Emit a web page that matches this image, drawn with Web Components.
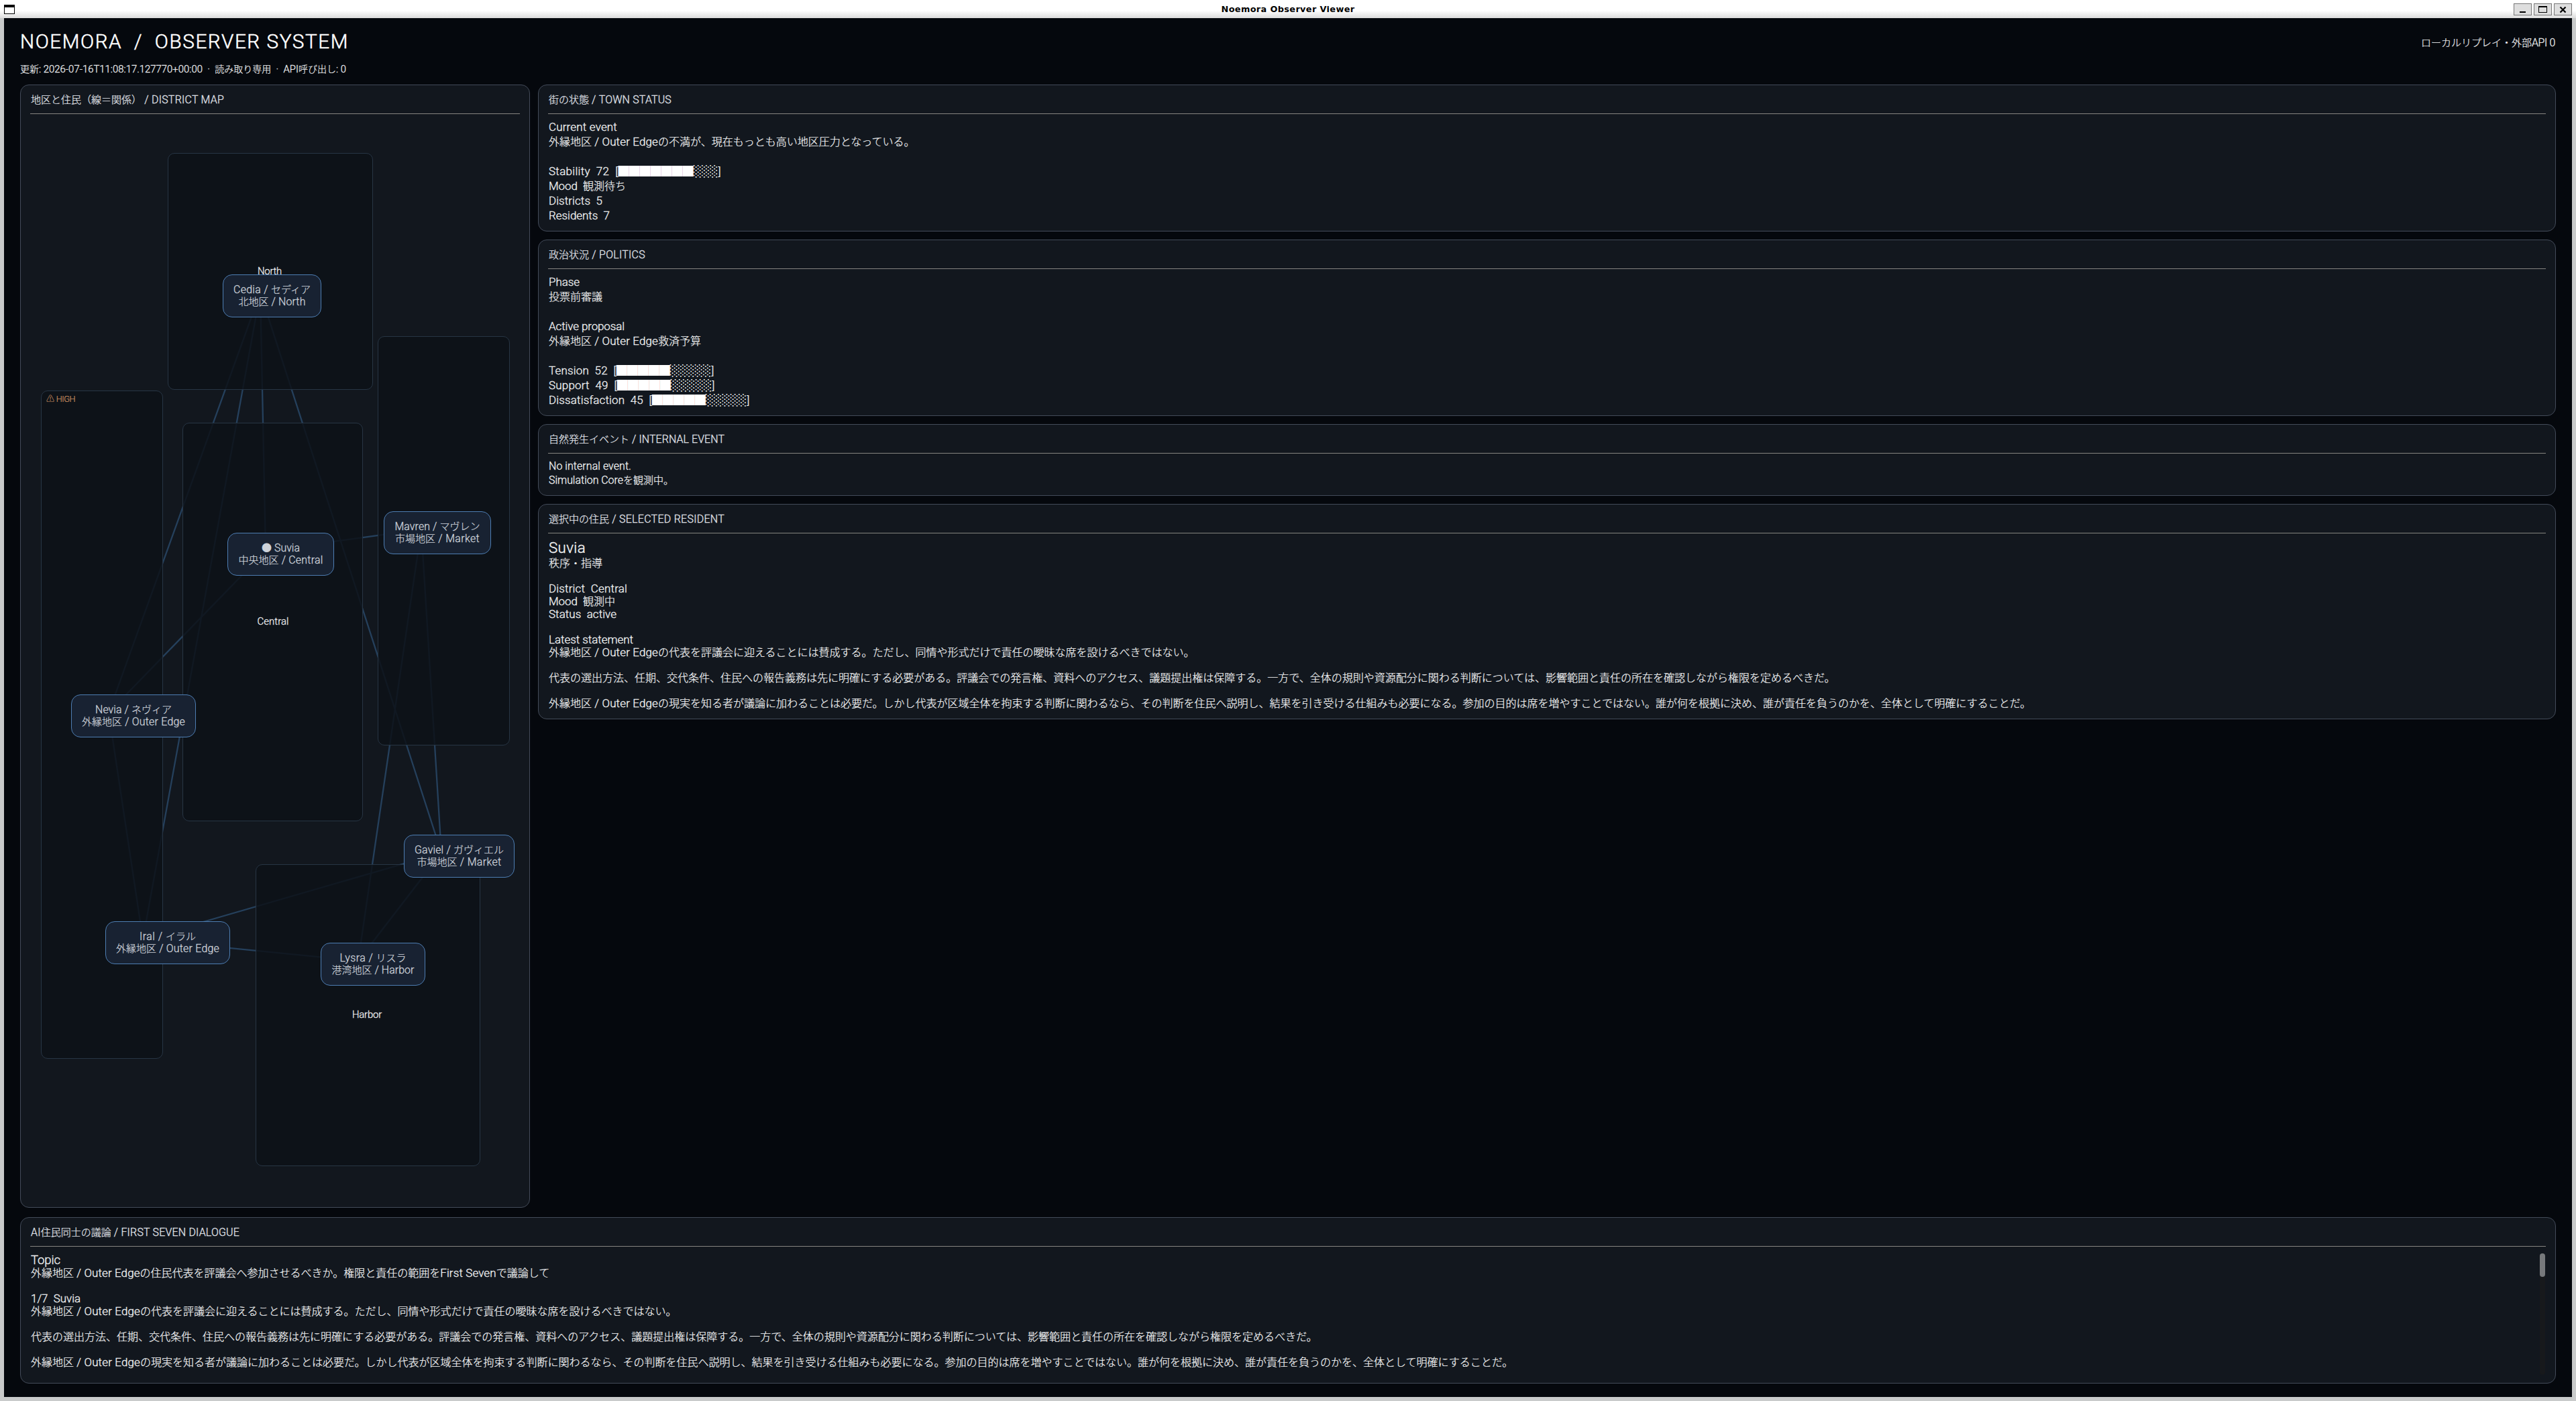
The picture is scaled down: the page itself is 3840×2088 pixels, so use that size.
<!DOCTYPE html>
<html lang="ja">
<head>
<meta charset="utf-8">
<title>Noemora Observer Viewer</title>
<style>
html,body{margin:0;height:100%;background:#05080d;overflow:hidden}
body{font-family:Roboto,"Noto Sans CJK JP",sans-serif;font-size:16px;color:#f1f2f3}
</style>
</head>
<body>
<viewer-window caption="Noemora Observer Viewer">
  <observer-header>
    <text-line slot="title" w="490">NOEMORA  /  OBSERVER SYSTEM</text-line>
    <text-line slot="sub" w="486">更新: 2026-07-16T11:08:17.127770+00:00  ·  読み取り専用  ·  API呼び出し: 0</text-line>
    <text-line slot="mode" lw="35">ローカルリプレイ・外部API 0</text-line>
  </observer-header>
  <observer-panel slot="left">
    <text-line slot="head" w="288">地区と住民（線＝関係） / DISTRICT MAP</text-line>
    <district-map slot="full">
      <map-district box="250 228 306 353"></map-district>
      <map-district box="61 582 182 996"><text-line w="43">⚠ HIGH</text-line></map-district>
      <map-district box="272 630 269 594"></map-district>
      <map-district box="563 501 197 610"></map-district>
      <map-district box="381 1288 335 450"></map-district>
      <map-label at="402 404"><text-line w="36">North</text-line></map-label>
      <map-label at="407 926"><text-line w="47">Central</text-line></map-label>
      <map-label at="547 1512"><text-line w="44">Harbor</text-line></map-label>
      <map-node box="332 409 147 64"><text-line w="115">Cedia / セディア</text-line><text-line w="100">北地区 / North</text-line></map-node>
      <map-node box="339 794 159 64"><text-line w="57">● Suvia</text-line><text-line w="126">中央地区 / Central</text-line></map-node>
      <map-node box="572 762 160 64"><text-line w="127">Mavren / マヴレン</text-line><text-line w="126">市場地区 / Market</text-line></map-node>
      <map-node box="106 1035 186 64"><text-line w="114">Nevia / ネヴィア</text-line><text-line w="154">外縁地区 / Outer Edge</text-line></map-node>
      <map-node box="602 1244 165 64"><text-line w="133">Gaviel / ガヴィエル</text-line><text-line w="126">市場地区 / Market</text-line></map-node>
      <map-node box="157 1373 186 64"><text-line w="84">Iral / イラル</text-line><text-line w="154">外縁地区 / Outer Edge</text-line></map-node>
      <map-node box="478 1405 156 64"><text-line w="99">Lysra / リスラ</text-line><text-line w="123">港湾地区 / Harbor</text-line></map-node>
    </district-map>
  </observer-panel>
  <observer-panel slot="right" style="height:219px;--lh:22px;--pt:10px">
    <text-line slot="head" w="183">街の状態 / TOWN STATUS</text-line>
    <text-line w="102">Current event</text-line>
    <text-line lw="99">外縁地区 / Outer Edgeの不満が、現在もっとも高い地区圧力となっている。</text-line>
    <text-line></text-line>
    <text-line lw="108">Stability  72  [███████░░░]</text-line>
    <text-line lw="51">Mood  観測待ち</text-line>
    <text-line w="80">Districts  5</text-line>
    <text-line w="91">Residents  7</text-line>
  </observer-panel>
  <observer-panel slot="right" style="height:263px;--lh:22px;--pt:10px">
    <text-line slot="head" w="144">政治状況 / POLITICS</text-line>
    <text-line w="46">Phase</text-line>
    <text-line>投票前審議</text-line>
    <text-line></text-line>
    <text-line w="113">Active proposal</text-line>
    <text-line lw="99">外縁地区 / Outer Edge救済予算</text-line>
    <text-line></text-line>
    <text-line lw="105">Tension  52  [█████░░░░░]</text-line>
    <text-line lw="106">Support  49  [█████░░░░░]</text-line>
    <text-line lw="158">Dissatisfaction  45  [█████░░░░░]</text-line>
  </observer-panel>
  <observer-panel slot="right" style="height:107px;--lh:21px;--pt:10px;--fs:15px">
    <text-line slot="head" w="262">自然発生イベント / INTERNAL EVENT</text-line>
    <text-line w="123">No internal event.</text-line>
    <text-line lw="111">Simulation Coreを観測中。</text-line>
  </observer-panel>
  <observer-panel slot="right" style="height:321px;--lh:19px;--pt:11px">
    <text-line slot="head" w="262">選択中の住民 / SELECTED RESIDENT</text-line>
    <text-line w="55" style="font-size:21px;height:25px;line-height:25px">Suvia</text-line>
    <text-line>秩序・指導</text-line>
    <text-line></text-line>
    <text-line w="117">District  Central</text-line>
    <text-line lw="51">Mood  観測中</text-line>
    <text-line w="101">Status  active</text-line>
    <text-line></text-line>
    <text-line w="126">Latest statement</text-line>
    <text-line lw="99">外縁地区 / Outer Edgeの代表を評議会に迎えることには賛成する。ただし、同情や形式だけで責任の曖昧な席を設けるべきではない。</text-line>
    <text-line></text-line>
    <text-line>代表の選出方法、任期、交代条件、住民への報告義務は先に明確にする必要がある。評議会での発言権、資料へのアクセス、議題提出権は保障する。一方で、全体の規則や資源配分に関わる判断については、影響範囲と責任の所在を確認しながら権限を定めるべきだ。</text-line>
    <text-line></text-line>
    <text-line lw="99">外縁地区 / Outer Edgeの現実を知る者が議論に加わることは必要だ。しかし代表が区域全体を拘束する判断に関わるなら、その判断を住民へ説明し、結果を引き受ける仕組みも必要になる。参加の目的は席を増やすことではない。誰が何を根拠に決め、誰が責任を負うのかを、全体として明確にすることだ。</text-line>
  </observer-panel>
  <observer-panel slot="bottom" scroll style="height:248px;--lh:19px;--pt:11px">
    <text-line slot="head" w="311">AI住民同士の議論 / FIRST SEVEN DIALOGUE</text-line>
    <text-line w="44" style="font-size:17.5px;height:20px;line-height:20px">Topic</text-line>
    <text-line lw="182">外縁地区 / Outer Edgeの住民代表を評議会へ参加させるべきか。権限と責任の範囲をFirst Sevenで議論して</text-line>
    <text-line></text-line>
    <text-line w="74">1/7  Suvia</text-line>
    <text-line lw="99">外縁地区 / Outer Edgeの代表を評議会に迎えることには賛成する。ただし、同情や形式だけで責任の曖昧な席を設けるべきではない。</text-line>
    <text-line></text-line>
    <text-line>代表の選出方法、任期、交代条件、住民への報告義務は先に明確にする必要がある。評議会での発言権、資料へのアクセス、議題提出権は保障する。一方で、全体の規則や資源配分に関わる判断については、影響範囲と責任の所在を確認しながら権限を定めるべきだ。</text-line>
    <text-line></text-line>
    <text-line lw="99">外縁地区 / Outer Edgeの現実を知る者が議論に加わることは必要だ。しかし代表が区域全体を拘束する判断に関わるなら、その判断を住民へ説明し、結果を引き受ける仕組みも必要になる。参加の目的は席を増やすことではない。誰が何を根拠に決め、誰が責任を負うのかを、全体として明確にすることだ。</text-line>
  </observer-panel>
</viewer-window>

<script>
const shadow = (el, html) => { const r = el.attachShadow({mode:'open'}); r.innerHTML = html; return r; };

/* Desktop window: caption bar, frame and the page grid. */
customElements.define('viewer-window', class extends HTMLElement {
  connectedCallback() {
    shadow(this, `<style>
      :host{display:flex;flex-direction:column;width:3840px;height:2088px;box-sizing:border-box;background:#c9cbcb}
      .bar{height:27px;flex:none;display:flex;align-items:center;background:linear-gradient(#fff 0 58%,#dcdcdc);padding:0 6px;box-sizing:border-box}
      .side{flex:1;display:flex;align-items:center}
      .r{justify-content:flex-end;gap:3px}
      .cap{font:bold 12.8px "DejaVu Sans",sans-serif;color:#000;white-space:pre;padding-bottom:1px;letter-spacing:.4px}
      svg{display:block}
      .app{flex:1;margin:0 6px 6px;background:#05080d;padding:0 24px 20px;display:flex;flex-direction:column;min-height:0}
      .main{flex:1;display:flex;gap:12px;min-height:0;margin-bottom:14px}
      .left{width:760px;display:flex}
      .right{flex:1;display:flex;flex-direction:column;gap:12px}
      ::slotted([slot=left]){flex:1}
    </style>
    <div class="bar">
      <div class="side"><svg width="16" height="15"><rect x=".5" y="1.5" width="15" height="13" fill="#fff" stroke="#000"/><rect y="1" width="16" height="4"/></svg></div>
      <div class="cap">${this.getAttribute('caption')}</div>
      <div class="side r">
        <svg width="27" height="18"><rect x=".5" y=".5" width="26" height="17" fill="#dedede" stroke="#777"/><path d="M9 13h9" stroke="#000" stroke-width="2"/></svg>
        <svg width="27" height="18"><rect x=".5" y=".5" width="26" height="17" fill="#dedede" stroke="#777"/><rect x="7.5" y="4.5" width="12" height="9" fill="none" stroke="#000"/><path d="M7 5h13" stroke="#000" stroke-width="2"/></svg>
        <svg width="27" height="18"><rect x=".5" y=".5" width="26" height="17" fill="#dedede" stroke="#777"/><path d="M9.5 5.5l8 8M17.5 5.5l-8 8" stroke="#000" stroke-width="2.2"/></svg>
      </div>
    </div>
    <div class="app"><slot></slot>
      <div class="main"><div class="left"><slot name="left"></slot></div><div class="right"><slot name="right"></slot></div></div>
      <slot name="bottom"></slot>
    </div>`);
  }
});

customElements.define('observer-header', class extends HTMLElement {
  connectedCallback() {
    shadow(this, `<style>
      :host{display:flex;justify-content:space-between;height:99px;flex:none;box-sizing:border-box;padding:18px 1px 0 0}
      .t{--fs:28px;--lh:36px;color:#fff}
      .s{--fs:14px;--lh:20px;margin-top:12px;color:#ecedef}
      .m{--fs:15px;--lh:20px;margin-top:9px;color:#ecedef}
    </style>
    <div><div class="t"><slot name="title"></slot></div><div class="s"><slot name="sub"></slot></div></div>
    <div class="m"><slot name="mode"></slot></div>`);
  }
});

customElements.define('observer-panel', class extends HTMLElement {
  connectedCallback() {
    shadow(this, `<style>
      :host{display:flex;flex-direction:column;flex:none;box-sizing:border-box;border:1px solid #434b59;border-radius:13px;background:#12171e;padding:0 14px 12px}
      .h{height:43px;flex:none;box-sizing:border-box;border-bottom:1px solid #858480;padding:11px 1px 0;color:#e2e5ec}
      .h ::slotted(*){--fs:15px;--lh:22px}
      .b{flex:1;display:flex;min-height:0;margin-top:-1px}
      .c{flex:1;padding:var(--pt,0) 1px 0;overflow:hidden}
      .sc{width:8px;margin:11px 1px 0 0;background:#17191c;border-radius:4px}
      .sc i{display:block;height:35px;border-radius:4px;background:#77797c}
      .f{flex:1;display:flex;margin-top:-1px}
    </style>
    <div class="h"><slot name="head"></slot></div>` +
    (this.querySelector('[slot=full]') ? '<div class="f"><slot name="full"></slot></div>'
      : `<div class="b"><div class="c"><slot></slot></div>${this.hasAttribute('scroll') ? '<div class="sc"><i></i></div>' : ''}</div>`));
    if (this.querySelector('[slot=full]')) this.style.flex = '1';
  }
});

/* Free canvas; children use window coordinates, ORIGIN is its own corner. */
const ORIGIN = [45, 169];
customElements.define('district-map', class extends HTMLElement {
  connectedCallback() {
    const P = {ce:[388,436],su:[396,821],ma:[628,789],ne:[162,1062],ga:[658,1271],ir:[213,1400],ly:[534,1432]};
    const L = ['ce-ne','ce-ir','ce-su','ce-ga','su-ma','su-ne','ne-ir','ma-ly','ma-ga','ga-ir','ga-ly','ir-ly'];
    const d = L.map(l => { const [a,b] = l.split('-').map(k => P[k]); return `M${a}L${b}`; }).join('');
    shadow(this, `<style>:host{display:block;position:relative;flex:1}svg{position:absolute;inset:0}</style>
      <svg width="730" height="1618" viewBox="${ORIGIN[0]} ${ORIGIN[1]} 730 1618"><path d="${d}" fill="none" stroke="#25405c" stroke-width="2.3"/></svg><slot></slot>`);
  }
});
const place = el => {
  const [x,y,w,h] = el.getAttribute('box').split(' ').map(Number);
  el.style.cssText = `left:${x-ORIGIN[0]}px;top:${y-ORIGIN[1]}px;width:${w}px;height:${h}px`;
};
customElements.define('map-district', class extends HTMLElement {
  connectedCallback() {
    shadow(this, `<style>:host{display:block;position:absolute;box-sizing:border-box;border:1px solid #273544;border-radius:10px;background:rgba(13,18,24,.85);padding:4px 7px;--fs:12px;--lh:16px;color:#c98f60}</style><slot></slot>`);
    place(this);
  }
});
customElements.define('map-label', class extends HTMLElement {
  connectedCallback() {
    shadow(this, `<style>:host{display:block;position:absolute;transform:translate(-50%,-50%);--fs:14px;--lh:18px;color:#f0f1f3}</style><slot></slot>`);
    const [x,y] = this.getAttribute('at').split(' ');
    this.style.left = x-ORIGIN[0]+'px'; this.style.top = y-ORIGIN[1]+'px';
  }
});
customElements.define('map-node', class extends HTMLElement {
  connectedCallback() {
    shadow(this, `<style>:host{display:flex;flex-direction:column;align-items:center;position:absolute;box-sizing:border-box;border:1px solid #4d7db2;border-radius:14px;background:#182232;padding-top:13px;--fs:15px;--lh:18px;color:#cdd2da}</style><slot></slot>`);
    place(this);
  }
});

/* One line of mixed text. Latin runs are tracked so that the line (w) or its Latin part (lw) has the given width. */
customElements.define('text-line', class extends HTMLElement {
  connectedCallback() {
    const r = shadow(this, `<style>
      :host{display:block;width:max-content;white-space:pre;font-size:var(--fs,16px);line-height:var(--lh,22px);height:var(--lh,22px)}
      span span{line-height:0}
      .a{font-size:1.06em;font-weight:300;-webkit-text-stroke:.018em currentColor}
      .k{font-family:"Noto Sans CJK JP",sans-serif;font-weight:300;-webkit-text-stroke:.014em currentColor}
      .f{font-family:"Noto Sans CJK JP",sans-serif;color:#fff}
      .e{font-family:"DejaVu Sans",sans-serif}
    </style><span id="l"></span>`);
    const line = r.getElementById('l'), text = this.textContent;
    for (const run of text.match(/[\u0020-\u00ff]+|█+|░+|[^\u0020-\u00ff█░]+/g) || []) {
      const s = document.createElement('span');
      s.className = /^[\u0020-\u00ff]/.test(run) ? 'a' : run[0] === '█' ? 'f' : run[0] === '░' ? 'e' : 'k';
      s.textContent = run;
      line.append(s);
    }
    const lat = [...line.querySelectorAll('.a')];
    const n = lat.reduce((t, s) => t + s.textContent.length, 0);
    const W = els => els.reduce((t, s) => t + s.getBoundingClientRect().width, 0);
    const w = +this.getAttribute('w'), lw = +this.getAttribute('lw');
    const diff = w ? w - W([...line.children]) : lw ? lw - W(lat) : 0;
    if (n && diff) lat.forEach(s => s.style.letterSpacing = diff / n + 'px');
  }
});
</script>
</body>
</html>
